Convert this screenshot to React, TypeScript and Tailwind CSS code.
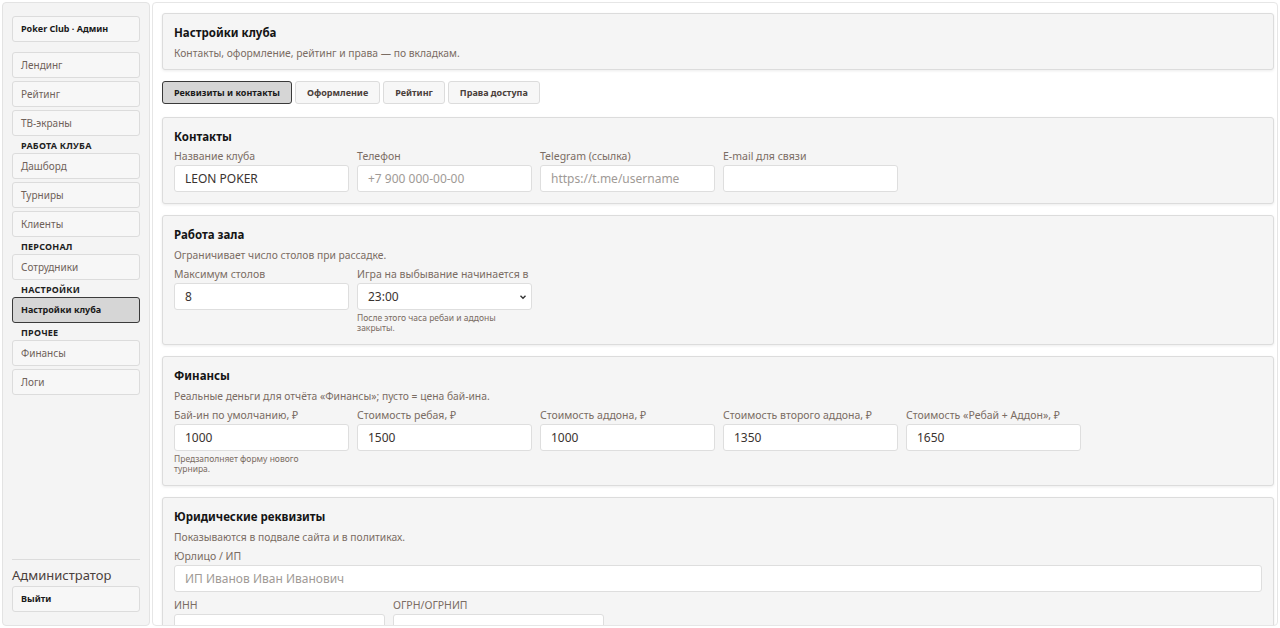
import React from "react";

const font = { fontFamily: '"Noto Sans", "Open Sans", sans-serif' };

function NavButton({ label, active = false, bold = false }: { label: string; active?: boolean; bold?: boolean }) {
  return (
    <div
      className={`h-[26px] shrink-0 flex items-center px-2 rounded-[3px] border ${
        active
          ? "bg-[#d6d6d6] border-[#3a3a3a] text-[#1a1a1a] font-bold text-[9px]"
          : bold
          ? "bg-[#f7f7f7] border-[#dcdcdc] text-[#1a1a1a] font-bold text-[9px]"
          : "bg-[#f7f7f7] border-[#dcdcdc] text-[#6f625a] text-[10px]"
      }`}
    >
      {label}
    </div>
  );
}

function SectionLabel({ label }: { label: string }) {
  return <div className="text-[9px] font-bold tracking-wide text-[#1f1f1f] pt-[3px] pl-[9px] leading-[8px]">{label}</div>;
}

function Field({ label, value, placeholder, hint, select = false }: { label: string; value?: string; placeholder?: string; hint?: string; select?: boolean }) {
  return (
    <div className="w-[175px] flex flex-col">
      <div className="text-[10.5px] text-[#7a6c63] leading-[12px] mb-[3px] whitespace-nowrap">{label}</div>
      <div className={`h-[27px] bg-white border border-[#dedede] rounded-[3px] flex items-center pl-[10px] text-[12px] ${select ? "pr-[4px]" : "pr-[10px]"}`}>
        {value ? <span className="text-[#3a3330]">{value}</span> : <span className="text-[#a09a96]">{placeholder}</span>}
        {select && (
          <svg className="ml-auto" width="8" height="8" viewBox="0 0 8 8">
            <path d="M1.5 2.8 L4 5.2 L6.5 2.8" fill="none" stroke="#333" strokeWidth="1.4" />
          </svg>
        )}
      </div>
      {hint && <div className="text-[8.5px] text-[#7a6c63] leading-[10px] mt-[3px] pr-6">{hint}</div>}
    </div>
  );
}

function Card({ title, subtitle, children }: { title: string; subtitle?: string; children?: React.ReactNode }) {
  return (
    <div className="bg-[#f5f5f5] border border-[#dcdcdc] rounded-[3px] shadow-[0_1px_3px_rgba(0,0,0,0.08)] px-[11px] pt-[10px] pb-[11px]">
      <div className="text-[11.5px] font-bold text-[#141414] leading-[18px]">{title}</div>
      {subtitle && <div className="text-[10.3px] text-[#7a6c63] leading-[14px] mt-[4px]">{subtitle}</div>}
      {children}
    </div>
  );
}

const tabBase = "h-[23px] px-[11px] flex items-center rounded-[3px] border text-[9px] font-bold";

export default function App() {
  return (
    <div className="h-[628px] w-[1280px] bg-white flex gap-[2px] p-[2px] overflow-hidden" style={font}>
      {/* Sidebar */}
      <aside className="w-[148px] shrink-0 bg-[#f4f4f4] border border-[#e3e3e3] rounded-[4px] flex flex-col px-[9px] pt-[13px] pb-[13px]">
        <NavButton label="Poker Club · Админ" bold />
        <div className="flex flex-col gap-[3px] mt-[10px]">
          <NavButton label="Лендинг" />
          <NavButton label="Рейтинг" />
          <NavButton label="ТВ-экраны" />
          <SectionLabel label="РАБОТА КЛУБА" />
          <NavButton label="Дашборд" />
          <NavButton label="Турниры" />
          <NavButton label="Клиенты" />
          <SectionLabel label="ПЕРСОНАЛ" />
          <NavButton label="Сотрудники" />
          <SectionLabel label="НАСТРОЙКИ" />
          <NavButton label="Настройки клуба" active />
          <SectionLabel label="ПРОЧЕЕ" />
          <NavButton label="Финансы" />
          <NavButton label="Логи" />
        </div>
        <div className="mt-auto border-t border-[#dcdcdc] pt-[7px]">
          <div className="text-[13px] text-[#4a403b] leading-[16px] mb-[3px]">Администратор</div>
          <NavButton label="Выйти" bold />
        </div>
      </aside>

      {/* Main */}
      <main className="flex-1 border border-[#e6e6e6] rounded-[4px] overflow-hidden">
        <div className="flex flex-col gap-[11px] pl-[9px] pr-[3px] pt-[10px]">
          <div className="bg-[#f5f5f5] border border-[#dcdcdc] rounded-[3px] shadow-[0_1px_3px_rgba(0,0,0,0.08)] px-[11px] pt-[10px] pb-[9px]">
            <div className="text-[11.5px] font-bold text-[#141414] leading-[18px]">Настройки клуба</div>
            <div className="text-[10.3px] text-[#7a6c63] leading-[14px] mt-[4px]">Контакты, оформление, рейтинг и права — по вкладкам.</div>
          </div>

          <div className="flex gap-[3px] mb-[2px]">
            <div className={`${tabBase} border-[#3a3a3a] bg-[#d6d6d6] text-[#1a1a1a]`}>Реквизиты и контакты</div>
            <div className={`${tabBase} border-[#dcdcdc] bg-[#f7f7f7] text-[#4a403b]`}>Оформление</div>
            <div className={`${tabBase} border-[#dcdcdc] bg-[#f7f7f7] text-[#4a403b]`}>Рейтинг</div>
            <div className={`${tabBase} border-[#dcdcdc] bg-[#f7f7f7] text-[#4a403b]`}>Права доступа</div>
          </div>

          <Card title="Контакты">
            <div className="flex gap-[8px] mt-[4px]">
              <Field label="Название клуба" value="LEON POKER" />
              <Field label="Телефон" placeholder="+7 900 000-00-00" />
              <Field label="Telegram (ссылка)" placeholder="https://t.me/username" />
              <Field label="E-mail для связи" />
            </div>
          </Card>

          <Card title="Работа зала" subtitle="Ограничивает число столов при рассадке.">
            <div className="flex gap-[8px] mt-[6px]">
              <Field label="Максимум столов" value="8" />
              <Field label="Игра на выбывание начинается в" value="23:00" select hint="После этого часа ребаи и аддоны закрыты." />
            </div>
          </Card>

          <Card title="Финансы" subtitle="Реальные деньги для отчёта «Финансы»; пусто = цена бай-ина.">
            <div className="flex gap-[8px] mt-[6px]">
              <Field label="Бай-ин по умолчанию, ₽" value="1000" hint="Предзаполняет форму нового турнира." />
              <Field label="Стоимость ребая, ₽" value="1500" />
              <Field label="Стоимость аддона, ₽" value="1000" />
              <Field label="Стоимость второго аддона, ₽" value="1350" />
              <Field label="Стоимость «Ребай + Аддон», ₽" value="1650" />
            </div>
          </Card>

          <Card title="Юридические реквизиты" subtitle="Показываются в подвале сайта и в политиках.">
            <div className="mt-[6px]">
              <div className="text-[10.5px] text-[#7a6c63] leading-[12px] mb-[3px]">Юрлицо / ИП</div>
              <div className="h-[27px] bg-white border border-[#dedede] rounded-[3px] flex items-center px-[10px] text-[12px] text-[#a09a96]">ИП Иванов Иван Иванович</div>
            </div>
            <div className="flex gap-[8px] mt-[7px]">
              <div className="w-[211px]">
                <div className="text-[10.5px] text-[#7a6c63] leading-[12px] mb-[3px]">ИНН</div>
                <div className="h-[27px] bg-white border border-[#dedede] rounded-[3px]" />
              </div>
              <div className="w-[211px]">
                <div className="text-[10.5px] text-[#7a6c63] leading-[12px] mb-[3px]">ОГРН/ОГРНИП</div>
                <div className="h-[27px] bg-white border border-[#dedede] rounded-[3px]" />
              </div>
            </div>
          </Card>
        </div>
      </main>
    </div>
  );
}
